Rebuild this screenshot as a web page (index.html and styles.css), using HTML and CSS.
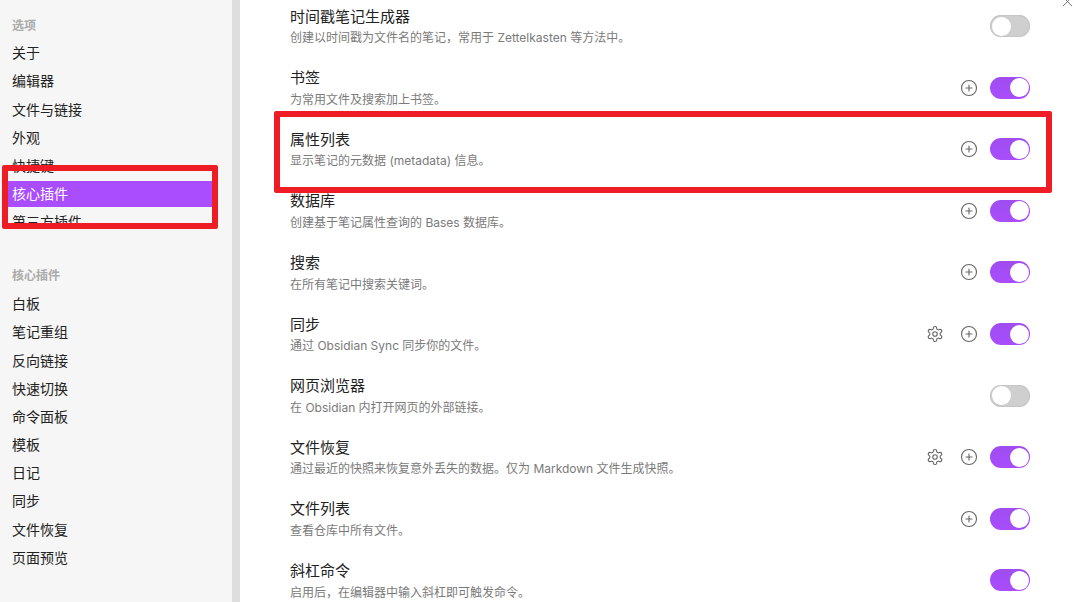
FILE: index.html
```html
<!DOCTYPE html>
<html lang="zh-CN">
<head>
<meta charset="utf-8">
<title>选项</title>
<link rel="stylesheet" href="styles.css">
</head>
<body>
<svg class="defs" width="0" height="0" aria-hidden="true">
  <symbol id="i-plus" viewBox="0 0 24 24"><circle cx="12" cy="12" r="10"/><path d="M8 12h8"/><path d="M12 8v8"/></symbol>
  <symbol id="i-gear" viewBox="0 0 24 24"><path d="M12.22 2h-.44a2 2 0 0 0-2 2v.18a2 2 0 0 1-1 1.73l-.43.25a2 2 0 0 1-2 0l-.15-.08a2 2 0 0 0-2.73.73l-.22.38a2 2 0 0 0 .73 2.73l.15.1a2 2 0 0 1 1 1.72v.51a2 2 0 0 1-1 1.74l-.15.09a2 2 0 0 0-.73 2.73l.22.38a2 2 0 0 0 2.73.73l.15-.08a2 2 0 0 1 2 0l.43.25a2 2 0 0 1 1 1.73V20a2 2 0 0 0 2 2h.44a2 2 0 0 0 2-2v-.18a2 2 0 0 1 1-1.73l.43-.25a2 2 0 0 1 2 0l.15.08a2 2 0 0 0 2.73-.73l.22-.39a2 2 0 0 0-.73-2.73l-.15-.08a2 2 0 0 1-1-1.74v-.5a2 2 0 0 1 1-1.74l.15-.09a2 2 0 0 0 .73-2.73l-.22-.38a2 2 0 0 0-2.73-.73l-.15.08a2 2 0 0 1-2 0l-.43-.25a2 2 0 0 1-1-1.73V4a2 2 0 0 0-2-2z"/><circle cx="12" cy="12" r="3"/></symbol>
</svg>
<div class="app">
  <aside class="sidebar">
    <div class="group">
      <div class="group-title">选项</div>
      <div class="nav-item">关于</div>
      <div class="nav-item">编辑器</div>
      <div class="nav-item">文件与链接</div>
      <div class="nav-item">外观</div>
      <div class="nav-item">快捷键</div>
      <div class="nav-item active">核心插件</div>
      <div class="nav-item">第三方插件</div>
    </div>
    <div class="group">
      <div class="group-title">核心插件</div>
      <div class="nav-item">白板</div>
      <div class="nav-item">笔记重组</div>
      <div class="nav-item">反向链接</div>
      <div class="nav-item">快速切换</div>
      <div class="nav-item">命令面板</div>
      <div class="nav-item">模板</div>
      <div class="nav-item">日记</div>
      <div class="nav-item">同步</div>
      <div class="nav-item">文件恢复</div>
      <div class="nav-item">页面预览</div>
    </div>
  </aside>
  <div class="divider"></div>
  <main class="content">
    <section class="row">
      <div class="info"><div class="name">时间戳笔记生成器</div><div class="desc">创建以时间戳为文件名的笔记，常用于 Zettelkasten 等方法中。</div></div>
      <div class="controls"><span class="toggle"></span></div>
    </section>
    <section class="row">
      <div class="info"><div class="name">书签</div><div class="desc">为常用文件及搜索加上书签。</div></div>
      <div class="controls"><svg class="icon"><use href="#i-plus"/></svg><span class="toggle on"></span></div>
    </section>
    <section class="row">
      <div class="info"><div class="name">属性列表</div><div class="desc">显示笔记的元数据 (metadata) 信息。</div></div>
      <div class="controls"><svg class="icon"><use href="#i-plus"/></svg><span class="toggle on"></span></div>
    </section>
    <section class="row">
      <div class="info"><div class="name">数据库</div><div class="desc">创建基于笔记属性查询的 Bases 数据库。</div></div>
      <div class="controls"><svg class="icon"><use href="#i-plus"/></svg><span class="toggle on"></span></div>
    </section>
    <section class="row">
      <div class="info"><div class="name">搜索</div><div class="desc">在所有笔记中搜索关键词。</div></div>
      <div class="controls"><svg class="icon"><use href="#i-plus"/></svg><span class="toggle on"></span></div>
    </section>
    <section class="row">
      <div class="info"><div class="name">同步</div><div class="desc">通过 Obsidian Sync 同步你的文件。</div></div>
      <div class="controls"><svg class="icon gear"><use href="#i-gear"/></svg><svg class="icon"><use href="#i-plus"/></svg><span class="toggle on"></span></div>
    </section>
    <section class="row">
      <div class="info"><div class="name">网页浏览器</div><div class="desc">在 Obsidian 内打开网页的外部链接。</div></div>
      <div class="controls"><span class="toggle"></span></div>
    </section>
    <section class="row">
      <div class="info"><div class="name">文件恢复</div><div class="desc">通过最近的快照来恢复意外丢失的数据。仅为 Markdown 文件生成快照。</div></div>
      <div class="controls"><svg class="icon gear"><use href="#i-gear"/></svg><svg class="icon"><use href="#i-plus"/></svg><span class="toggle on"></span></div>
    </section>
    <section class="row">
      <div class="info"><div class="name">文件列表</div><div class="desc">查看仓库中所有文件。</div></div>
      <div class="controls"><svg class="icon"><use href="#i-plus"/></svg><span class="toggle on"></span></div>
    </section>
    <section class="row">
      <div class="info"><div class="name">斜杠命令</div><div class="desc">启用后，在编辑器中输入斜杠即可触发命令。</div></div>
      <div class="controls"><span class="toggle on"></span></div>
    </section>
  </main>
</div>
<svg class="close" viewBox="0 0 12 12"><path d="M1 0l10 10M11 0L1 10"/></svg>
<div class="mark mark-side"></div>
<div class="mark mark-main"></div>
</body>
</html>
```
FILE: styles.css
```css
* { box-sizing: border-box; }
html, body { margin: 0; height: 100%; overflow: hidden; background: #fff; }
body { font-family: Inter, "Noto Sans CJK SC", sans-serif; color: #222; position: relative; }
.defs { position: absolute; }
.app { display: flex; height: 602px; }

.sidebar { width: 232px; flex: none; background: #f6f6f6; padding: 13px 20px 0 8px; }
.group { display: flex; flex-direction: column; gap: 2.2px; }
.group + .group { margin-top: 28px; }
.group-title { height: 25px; padding-left: 4px; font-size: 12px; line-height: 25px; font-weight: 700; color: #ababab; }
.group + .group .group-title { margin-bottom: 0.65px; }
.nav-item { height: 26px; padding-left: 4px; font-size: 14px; line-height: 26px; color: #222; }
.nav-item.active { background: #a94dff; color: #fff; }

.divider { width: 8px; flex: none; background: #dedede; }

.content { flex: 1; padding: 0 47px 0 50px; margin-top: -4.75px; }
.row { height: 61.6px; display: flex; align-items: center; justify-content: space-between; }
.info { padding-top: 1.7px; }
.name { font-size: 15px; line-height: 20px; color: #222; }
.desc { margin-top: 1.7px; font-size: 12px; line-height: 19px; color: #7a7a7a; }
.controls { display: flex; align-items: center; gap: 12px; }
.icon { width: 18px; height: 18px; fill: none; stroke: #666; stroke-width: 1.5; stroke-linecap: round; stroke-linejoin: round; }
.gear { margin-right: 4px; }

.toggle { position: relative; display: block; width: 40px; height: 22px; border-radius: 11px; background: #cfcfcf; box-shadow: inset 0 0 0 1px #c6c6c6; }
.toggle::after { content: ""; position: absolute; left: 1.5px; top: 1.5px; width: 19px; height: 19px; border-radius: 50%; background: #fff; }
.toggle.on { background: linear-gradient(#9f4df0, #a94dff); box-shadow: none; }
.toggle.on::after { left: 19.5px; }

.close { position: absolute; left: 1062px; top: -3px; width: 11px; height: 11px; fill: none; stroke: #666; stroke-width: 1; }

.mark { position: absolute; border: 6px solid #ee1c25; border-radius: 2px; }
.mark-side { left: 2px; top: 165px; width: 216px; height: 64px; }
.mark-main { left: 274px; top: 111px; width: 778px; height: 82px; }
```
